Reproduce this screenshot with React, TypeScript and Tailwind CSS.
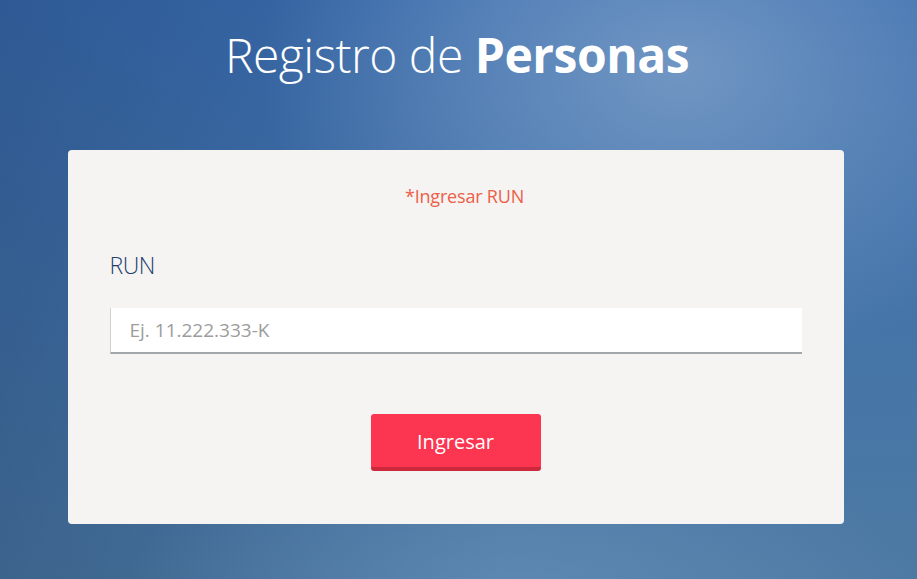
export default function App() {
  return (
    <div
      className="min-h-[579px] w-full flex flex-col items-center bg-[radial-gradient(ellipse_420px_300px_at_680px_70px,rgba(125,160,200,0.8),rgba(125,160,200,0)),radial-gradient(ellipse_400px_200px_at_520px_610px,rgba(110,150,190,0.55),rgba(110,150,190,0)),linear-gradient(to_right,rgba(15,40,80,0.28),rgba(15,40,80,0)_55%),linear-gradient(to_bottom,#3a6cae,#4d7aa3)] font-['Open_Sans',sans-serif]"
    >
      {/* Titulo */}
      <h1 className="mt-[22px] mr-[3px] text-[48px] leading-[66px] text-white tracking-[-0.5px]">
        <span className="font-light">Registro de </span>
        <span className="font-bold">Personas</span>
      </h1>

      {/* Formulario */}
      <div className="mt-[62px] mr-[6px] w-[776px] h-[374px] bg-[#f5f4f2] rounded-[4px] px-[42px] pt-[34px] flex flex-col">
        <p className="text-center text-[18px] text-[#ec6048] leading-[24px] ml-[18px] tracking-[-0.2px]">*Ingresar RUN</p>

        <label className="mt-[42px] text-[23px] font-light text-[#1d3e6e] leading-[30px] tracking-[-0.5px]">RUN</label>

        <input
          type="text"
          placeholder="Ej. 11.222.333-K"
          className="mt-[28px] h-[46px] w-full bg-white border-l border-l-[#cfd1d4] border-b-2 border-b-[#a3a7ab] pl-[19px] pr-4 text-[19px] text-gray-700 placeholder:text-[#9c9c9c] outline-none"
        />

        <div className="mt-[60px] flex justify-center">
          <button className="w-[170px] h-[57px] bg-[#fc3550] border-b-4 border-b-[#cc2a3c] rounded-[3px] text-white text-[20px] leading-none pt-[2px]">
            Ingresar
          </button>
        </div>
      </div>
    </div>
  );
}
